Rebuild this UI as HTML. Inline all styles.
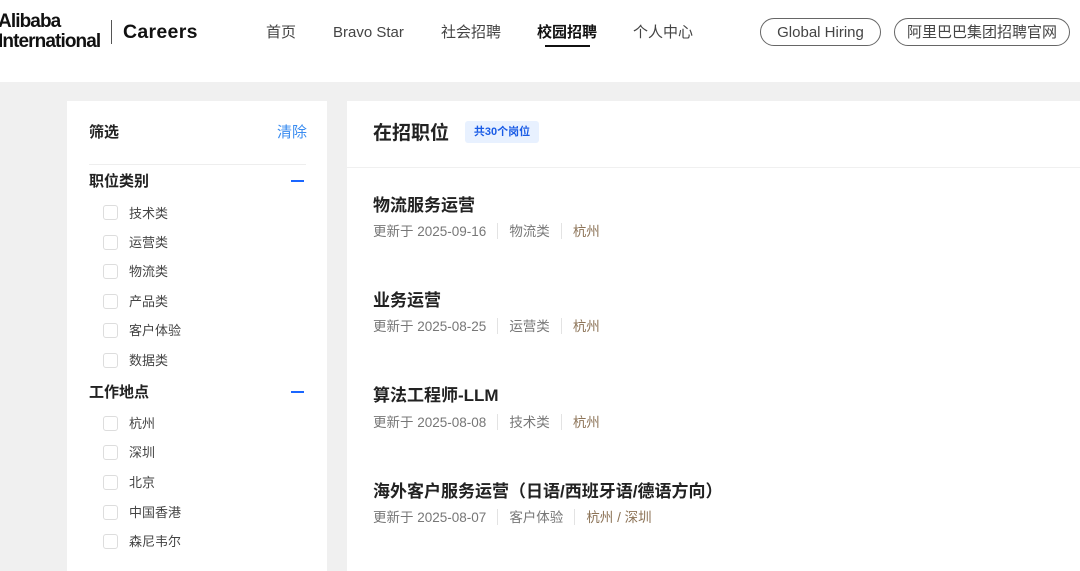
<!DOCTYPE html>
<html><head><meta charset="utf-8"><style>
*{margin:0;padding:0;box-sizing:border-box}
body{width:1080px;height:563px;overflow:hidden;background:#f0f0f0;font-family:"Liberation Sans","Noto Sans CJK SC",sans-serif;position:relative;color:#222}
.hdr{position:absolute;left:0;top:0;width:1080px;height:82px;background:#fff}
.logo{position:absolute;left:-2px;top:12px;font-weight:bold;font-size:19px;line-height:20px;letter-spacing:-0.9px;color:#111}
.sep{position:absolute;left:111px;top:20px;width:1px;height:24px;background:#555}
.car{position:absolute;left:123px;top:20px;font-weight:bold;font-size:19.5px;line-height:24px;color:#111;letter-spacing:.3px}
.nav{position:absolute;top:23px;font-size:15px;line-height:20px;color:#444}
.nav.act{color:#111;font-weight:bold}
.ul{position:absolute;left:545px;top:45px;width:45px;height:2px;background:#111}
.pill{position:absolute;top:18px;height:28px;border:1px solid #666;border-radius:14px;font-size:15px;color:#444;line-height:27px;text-align:center}
.lp{position:absolute;left:67px;top:101px;width:260px;height:470px;background:#fff}
.rp{position:absolute;left:347px;top:101px;width:740px;height:470px;background:#fff}
.t{position:absolute;font-size:15px;line-height:20px}
.cb{position:absolute;left:103px;width:15px;height:15px;border:1px solid #ddd;border-radius:3px}
.it{position:absolute;left:129px;font-size:13px;line-height:18px;color:#444}
.minus{position:absolute;left:291px;width:13px;height:1.5px;background:#1a66ff}
.jt{position:absolute;left:373px;font-size:17px;line-height:22px;font-weight:bold;color:#222}
.jm{position:absolute;left:373px;font-size:13.5px;line-height:18px;color:#777;white-space:nowrap}
.jm i{display:inline-block;width:1px;height:16px;background:#e3e3e3;vertical-align:-3px;margin:0 11px}
.jm b{font-weight:normal;color:#8c7357}
</style></head><body>
<div class="hdr">
<div class="logo">Alibaba<br>International</div>
<div class="sep"></div>
<div class="car">Careers</div>
<div class="nav" style="left:266px">首页</div>
<div class="nav" style="left:333px">Bravo Star</div>
<div class="nav" style="left:441px">社会招聘</div>
<div class="nav act" style="left:537px">校园招聘</div>
<div class="ul"></div>
<div class="nav" style="left:633px">个人中心</div>
<div class="pill" style="left:760px;width:121px">Global Hiring</div>
<div class="pill" style="left:894px;width:176px">阿里巴巴集团招聘官网</div>
</div>
<div class="lp"></div>
<div class="rp"></div>
<div class="t" style="left:89px;top:123px;font-weight:bold">筛选</div>
<div class="t" style="left:277px;top:123px;color:#3a8cf0">清除</div>
<div style="position:absolute;left:89px;top:164px;width:217px;height:1px;background:#eee"></div>
<div class="t" style="left:89px;top:172px;font-weight:bold">职位类别</div><div class="minus" style="top:180px"></div>
<div class="cb" style="top:205px"></div><div class="it" style="top:205px">技术类</div>
<div class="cb" style="top:235px"></div><div class="it" style="top:234px">运营类</div>
<div class="cb" style="top:264px"></div><div class="it" style="top:263px">物流类</div>
<div class="cb" style="top:294px"></div><div class="it" style="top:293px">产品类</div>
<div class="cb" style="top:323px"></div><div class="it" style="top:322px">客户体验</div>
<div class="cb" style="top:353px"></div><div class="it" style="top:352px">数据类</div>
<div class="t" style="left:89px;top:383px;font-weight:bold">工作地点</div><div class="minus" style="top:391px"></div>
<div class="cb" style="top:416px"></div><div class="it" style="top:415px">杭州</div>
<div class="cb" style="top:445px"></div><div class="it" style="top:444px">深圳</div>
<div class="cb" style="top:475px"></div><div class="it" style="top:474px">北京</div>
<div class="cb" style="top:505px"></div><div class="it" style="top:504px">中国香港</div>
<div class="cb" style="top:534px"></div><div class="it" style="top:533px">森尼韦尔</div>
<div style="position:absolute;left:373px;top:121px;font-size:19px;line-height:26px;font-weight:bold">在招职位</div>
<div style="position:absolute;left:465px;top:121px;width:74px;height:22px;background:#e8f1ff;border-radius:3px;color:#1a5ce6;font-size:11px;font-weight:bold;line-height:22px;text-align:center">共30个岗位</div>
<div style="position:absolute;left:347px;top:167px;width:733px;height:1px;background:#f0f0f0"></div>
<div class="jt" style="top:195px">物流服务运营</div>
<div class="jm" style="top:223px">更新于 2025-09-16<i></i>物流类<i></i><b>杭州</b></div>
<div class="jt" style="top:290px">业务运营</div>
<div class="jm" style="top:318px">更新于 2025-08-25<i></i>运营类<i></i><b>杭州</b></div>
<div class="jt" style="top:385px">算法工程师-LLM</div>
<div class="jm" style="top:414px">更新于 2025-08-08<i></i>技术类<i></i><b>杭州</b></div>
<div class="jt" style="top:481px">海外客户服务运营（日语/西班牙语/德语方向）</div>
<div class="jm" style="top:509px">更新于 2025-08-07<i></i>客户体验<i></i><b>杭州 / 深圳</b></div>
</body></html>
